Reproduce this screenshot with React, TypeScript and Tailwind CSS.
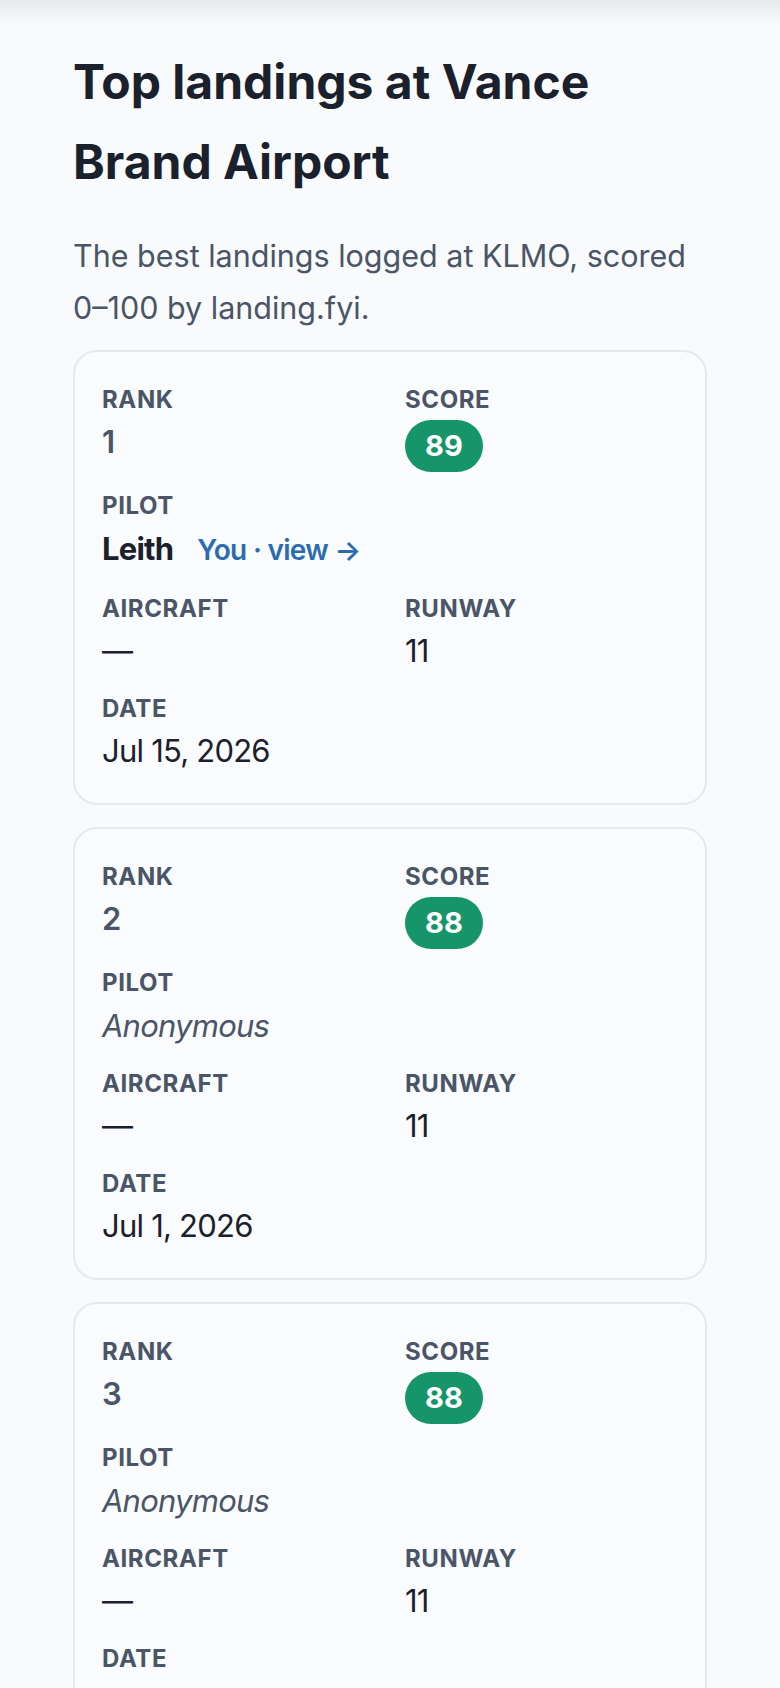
import React from "react";

type Landing = {
  rank: number;
  score: number;
  pilot: string | null;
  isYou?: boolean;
  aircraft: string | null;
  runway: string;
  date: string;
};

const landings: Landing[] = [
  { rank: 1, score: 89, pilot: "Leith", isYou: true, aircraft: null, runway: "11", date: "Jul 15, 2026" },
  { rank: 2, score: 88, pilot: null, aircraft: null, runway: "11", date: "Jul 1, 2026" },
  { rank: 3, score: 88, pilot: null, aircraft: null, runway: "11", date: "Jun 24, 2026" },
  { rank: 4, score: 86, pilot: null, aircraft: null, runway: "29", date: "Jun 12, 2026" },
];

function Label({ children }: { children: React.ReactNode }) {
  return (
    <dt className="text-[24px] leading-[32px] font-bold uppercase tracking-wide text-[#4a5568]">
      {children}
    </dt>
  );
}

function LandingCard({ landing }: { landing: Landing }) {
  return (
    <li className="rounded-[24px] border-2 border-[#e6e8ec] bg-[#fafbfc] px-[27px] pt-[32px] pb-[28px]">
      <dl className="grid grid-cols-2 gap-x-[30px] gap-y-[18px]">
        <div>
          <Label>Rank</Label>
          <dd className="mt-[2px] text-[31px] leading-[48px] font-semibold tracking-tight text-[#4a5568]">
            {landing.rank}
          </dd>
        </div>
        <div>
          <Label>Score</Label>
          <dd className="mt-[4px]">
            <span className="inline-flex h-[52px] items-center rounded-full bg-[#17956a] px-[20px] text-[29px] font-bold text-white">
              {landing.score}
            </span>
          </dd>
        </div>

        <div className="col-span-2">
          <Label>Pilot</Label>
          <dd className="mt-[2px] flex items-baseline leading-[49px]">
            {landing.pilot ? (
              <>
                <span className="text-[31px] font-bold tracking-tight text-[#1a202c]">{landing.pilot}</span>
                {landing.isYou && (
                  <a href="#" className="ml-[24px] text-[28px] font-semibold tracking-tight text-[#2b6cb0]">
                    You · view →
                  </a>
                )}
              </>
            ) : (
              <span className="text-[31px] italic tracking-tight text-[#4a5568]">Anonymous</span>
            )}
          </dd>
        </div>

        <div>
          <Label>Aircraft</Label>
          <dd className="mt-[2px] text-[31px] leading-[48px] tracking-tight text-[#1a202c]">
            {landing.aircraft ?? "—"}
          </dd>
        </div>
        <div>
          <Label>Runway</Label>
          <dd className="mt-[2px] text-[31px] leading-[48px] tracking-tight text-[#1a202c]">{landing.runway}</dd>
        </div>

        <div className="col-span-2">
          <Label>Date</Label>
          <dd className="mt-[2px] text-[31px] leading-[48px] tracking-tight text-[#1a202c]">{landing.date}</dd>
        </div>
      </dl>
    </li>
  );
}

export default function App() {
  return (
    <div className="min-h-screen bg-[#f9fafb] font-['Inter','Noto_Sans',sans-serif]">
      {/* header shadow bleeding in from above */}
      <div className="pointer-events-none fixed inset-x-0 top-0 h-6 bg-gradient-to-b from-black/[0.07] to-transparent" />

      <main className="px-[73px] pt-[42px] pb-12">
        <h1 className="max-w-[600px] text-[48px] leading-[80px] font-bold text-[#1a202c]">
          Top landings at Vance Brand Airport
        </h1>
        <p className="mt-[28px] text-[30.5px] leading-[52px] text-[#4a5568]">
          The best landings logged at KLMO, scored 0–100 by landing.fyi.
        </p>

        <ul className="mt-4 flex flex-col gap-[22px]">
          {landings.map((l) => (
            <LandingCard key={l.rank} landing={l} />
          ))}
        </ul>
      </main>
    </div>
  );
}
